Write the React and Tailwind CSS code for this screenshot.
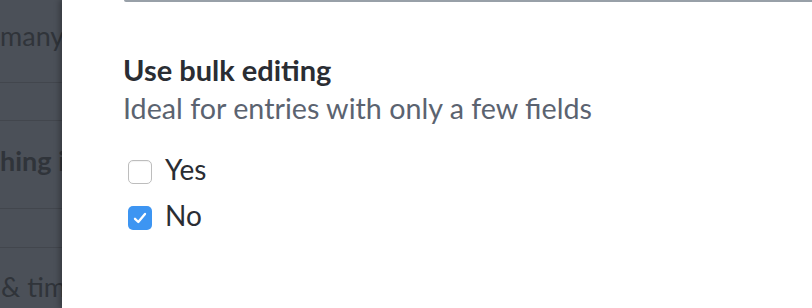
export default function App() {
  const font = { fontFamily: "Lato, 'Noto Sans', sans-serif" };
  return (
    <div className="flex w-[812px] h-[308px] overflow-hidden bg-white" style={font}>
      {/* dimmed page behind the panel */}
      <div className="w-[62px] shrink-0 bg-[#4b5058] text-[#30343a] text-[27px] leading-none overflow-hidden flex flex-col">
        <div className="h-[82px] pt-[22px] whitespace-nowrap">many</div>
        <div className="h-[38px] border-t border-[#42464d]" />
        <div className="h-[88px] border-t border-[#42464d] pt-[26px] whitespace-nowrap font-bold">hing in</div>
        <div className="h-[39px] border-t border-[#42464d]" />
        <div className="flex-1 border-t border-[#42464d] pt-[25px] pl-[1px] whitespace-nowrap">&amp; time</div>
      </div>

      <div className="flex-1 relative z-10 bg-white shadow-[-3px_0_5px_rgba(0,0,0,0.25)] flex flex-col">
        <div className="ml-[62px] h-[2px] bg-[#98a0a8] rounded-bl-[3px]" />
        <div className="pl-[61px] pt-[53px]">
          <h2 className="text-[29px] font-bold text-[#2a2d33] leading-none">Use bulk editing</h2>
          <p className="text-[28.7px] text-[#5b6370] leading-none mt-[10px]">Ideal for entries with only a few fields</p>
          <div className="mt-[32px] flex flex-col gap-[18px]">
            <label className="flex items-start gap-[13px] h-[28px]">
              <span className="ml-[5px] mt-[5px] w-[24px] h-[24px] rounded-[5px] border border-[#bdbdbd] bg-white shadow-[inset_0_1px_1px_rgba(0,0,0,0.05)]" />
              <span className="text-[28px] text-[#2a2d33] leading-none">Yes</span>
            </label>
            <label className="flex items-start gap-[13px] h-[28px]">
              <span className="ml-[5px] mt-[5px] w-[24px] h-[24px] rounded-[5px] bg-[#3d95f2] flex items-center justify-center">
                <svg width="14" height="12" viewBox="0 0 14 12" fill="none">
                  <path d="M2 6.8 L5.3 10 L12 2" stroke="white" strokeWidth="2.3" strokeLinecap="round" strokeLinejoin="round" />
                </svg>
              </span>
              <span className="text-[28px] text-[#2a2d33] leading-none">No</span>
            </label>
          </div>
        </div>
      </div>
    </div>
  );
}
